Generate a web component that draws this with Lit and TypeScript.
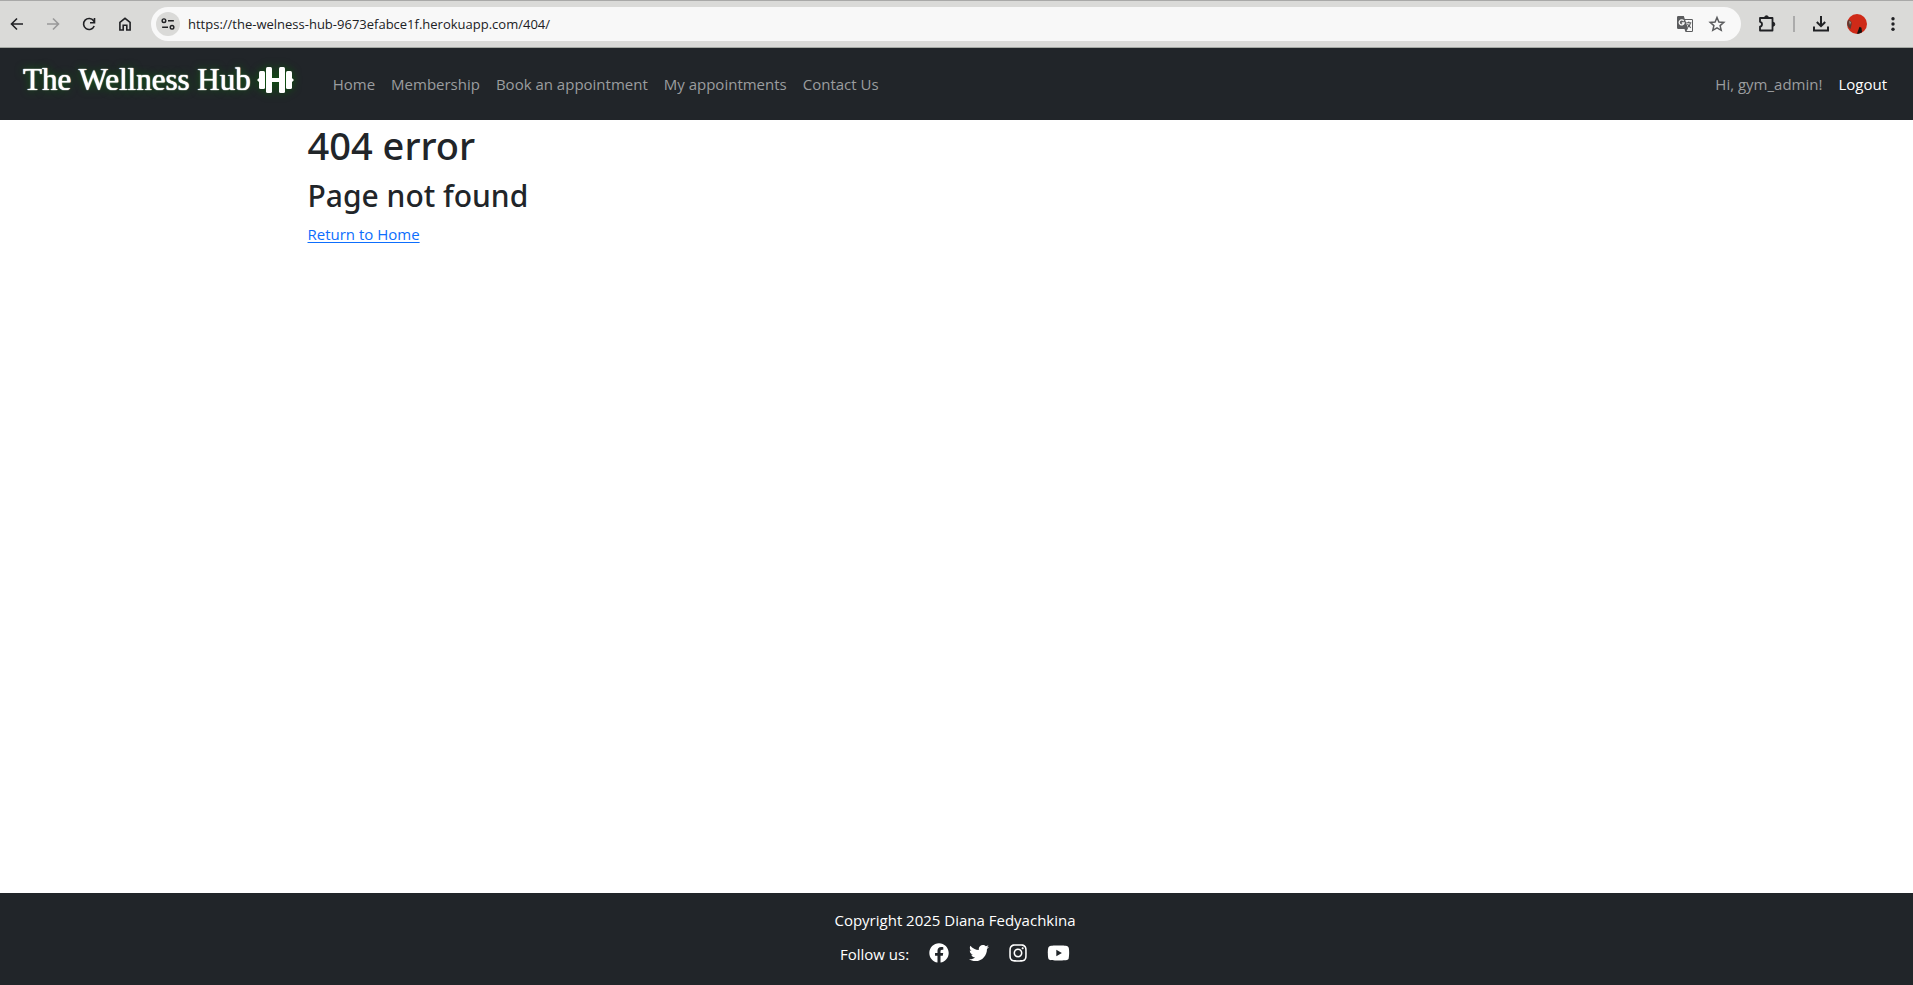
import { LitElement, html, css, svg } from "lit";
import { customElement } from "lit/decorators.js";

const NAV_LINKS = ["Home", "Membership", "Book an appointment", "My appointments", "Contact Us"];

const SOCIAL = [
  { name: "Facebook", box: "0 0 512 512", w: 20, d: "M504 256C504 119 393 8 256 8S8 119 8 256c0 123.78 90.69 226.38 209.25 245V327.69h-63V256h63v-54.64c0-62.15 37-96.48 93.67-96.48 27.14 0 55.52 4.84 55.52 4.84v61h-31.28c-30.8 0-40.41 19.12-40.41 38.73V256h68.78l-11 71.69h-57.78V501C413.31 482.38 504 379.78 504 256z" },
  { name: "Twitter", box: "0 0 512 512", w: 20, d: "M459.37 151.716c.325 4.548.325 9.097.325 13.645 0 138.72-105.583 298.558-298.558 298.558-59.452 0-114.68-17.219-161.137-47.106 8.447.974 16.568 1.299 25.34 1.299 49.055 0 94.213-16.568 130.274-44.832-46.132-.975-84.792-31.188-98.112-72.772 6.498.974 12.995 1.624 19.818 1.624 9.421 0 18.843-1.3 27.614-3.573-48.081-9.747-84.143-51.98-84.143-102.985v-1.299c13.969 7.797 30.214 12.67 47.431 13.319-28.264-18.843-46.781-51.005-46.781-87.391 0-19.492 5.197-37.36 14.294-52.954 51.655 63.675 129.3 105.258 216.365 109.807-1.624-7.797-2.599-15.918-2.599-24.04 0-57.828 46.782-104.934 104.934-104.934 30.213 0 57.502 12.67 76.67 33.137 23.715-4.548 46.456-13.32 66.599-25.34-7.798 24.366-24.366 44.833-46.132 57.827 21.117-2.273 41.584-8.122 60.426-16.243-14.292 20.791-32.161 39.308-52.628 54.253z" },
  { name: "Instagram", box: "0 0 448 512", w: 18, d: "M224.1 141c-63.6 0-114.9 51.3-114.9 114.9s51.3 114.9 114.9 114.9S339 319.5 339 255.9 287.7 141 224.1 141zm0 189.6c-41.1 0-74.7-33.5-74.7-74.7s33.5-74.7 74.7-74.7 74.7 33.5 74.7 74.7-33.6 74.7-74.7 74.7zm146.4-194.3c0 14.9-12 26.8-26.8 26.8-14.9 0-26.8-12-26.8-26.8s12-26.8 26.8-26.8 26.8 12 26.8 26.8zm76.1 27.2c-1.7-35.9-9.9-67.7-36.2-93.9-26.2-26.2-58-34.4-93.9-36.2-37-2.1-147.9-2.1-184.9 0-35.8 1.7-67.6 9.9-93.9 36.1s-34.4 58-36.2 93.9c-2.1 37-2.1 147.9 0 184.9 1.7 35.9 9.9 67.7 36.2 93.9s58 34.4 93.9 36.2c37 2.1 147.9 2.1 184.9 0 35.9-1.7 67.7-9.9 93.9-36.2 26.2-26.2 34.4-58 36.2-93.9 2.1-37 2.1-147.8 0-184.8zM398.8 388c-7.8 19.6-22.9 34.7-42.6 42.6-29.5 11.7-99.5 9-132.1 9s-102.7 2.6-132.1-9c-19.6-7.8-34.7-22.9-42.6-42.6-11.7-29.5-9-99.5-9-132.1s-2.6-102.7 9-132.1c7.8-19.6 22.9-34.7 42.6-42.6 29.5-11.7 99.5-9 132.1-9s102.7-2.6 132.1 9c19.6 7.8 34.7 22.9 42.6 42.6 11.7 29.5 9 99.5 9 132.1s2.7 102.7-9 132.1z" },
  { name: "YouTube", box: "0 0 576 512", w: 23, d: "M549.655 124.083c-6.281-23.65-24.787-42.276-48.284-48.597C458.781 64 288 64 288 64S117.22 64 74.629 75.486c-23.497 6.322-42.003 24.947-48.284 48.597-11.412 42.867-11.412 132.305-11.412 132.305s0 89.438 11.412 132.305c6.281 23.65 24.787 41.5 48.284 47.821C117.22 448 288 448 288 448s170.78 0 213.371-11.486c23.497-6.321 42.003-24.171 48.284-47.821 11.412-42.867 11.412-132.305 11.412-132.305s0-89.438-11.412-132.305zm-317.51 213.508V175.185l142.739 81.205-142.739 81.201z" },
];

@customElement("app-root")
export class AppRoot extends LitElement {
  static styles = css`
    :host { display: flex; flex-direction: column; min-height: 100vh; background: #fff; color: #212529;
      font: 15px/24px "Open Sans", "Noto Sans", sans-serif; }
    * { box-sizing: border-box; }
    svg { display: block; }
    button { border: 0; padding: 0; background: none; color: #202124; display: grid; place-items: center; width: 20px; height: 20px; flex: none; }
    button:disabled { color: #999; }
    .toolbar { display: flex; align-items: center; height: 48px; padding: 0 10px 0 7px; background: #dadad8;
      border-top: 1px solid #a9a9a8; border-bottom: 1px solid #a4a8a3; }
    .history { display: flex; gap: 16px; }
    .address { flex: 1; display: flex; align-items: center; height: 34px; margin: 0 16px; padding: 0 14px 0 5px; border-radius: 17px; background: #f8f8f8; }
    .address .site { width: 24px; height: 24px; border-radius: 50%; background: #dadad8; }
    .address input { flex: 1; min-width: 0; border: 0; outline: 0; padding: 0 8px; background: none; color: #202124; font: 13px/20px "Open Sans", "Noto Sans", sans-serif; }
    .address .tools { display: flex; gap: 12px; }
    .address .tools button { color: #5b5c5e; }
    .extras { display: flex; align-items: center; gap: 16px; }
    .rule { width: 2px; height: 16px; background: #ababab; }
    .navbar { display: flex; align-items: center; min-height: 72px; padding: 0 26px 0 23px; background: #212529; }
    .brand { display: flex; align-items: center; gap: 6px; margin-right: 39px; padding-bottom: 9px; color: #fff; text-decoration: none;
      font: 31px/40px "Liberation Serif", serif; text-shadow: 0 0 1px #fff, 0 0 1px #fff, 0 0 8px #0a6a0a; }
    .brand svg { filter: drop-shadow(0 0 4px #0a5a0a); }
    nav { display: flex; flex: 1; gap: 16px; }
    nav a { color: #9b9d9f; text-decoration: none; }
    .user { display: flex; gap: 16px; color: #9b9d9f; }
    .user a { color: #fff; text-decoration: none; }
    main { flex: 1; width: 100%; max-width: 1320px; margin: 0 auto; padding: 2px 12px 0 11px; }
    h1, h2 { margin: 0; font-family: "Noto Sans", "Open Sans", sans-serif; font-weight: 500; }
    h1 { margin-bottom: 8px; font-size: 38px; line-height: 46px; }
    h2 { margin-bottom: 6px; font-size: 30px; line-height: 40px; }
    main a { color: #0d6efd; text-underline-offset: 2px; }
    footer { display: flex; flex-direction: column; align-items: center; padding: 15px 3px 19px 0; background: #212529; color: #fff; }
    footer p { margin: 0 0 10px; }
    .follow { display: flex; align-items: center; gap: 20px; }
    .follow a { color: #fff; }
    .follow svg { margin-bottom: 2px; }
  `;

  private icon(body: unknown, size = 20) {
    return html`<svg width=${size} height=${size} viewBox="0 0 20 20" fill="none" stroke="currentColor" stroke-width="1.6" aria-hidden="true">${body}</svg>`;
  }

  render() {
    return html`
      <div class="toolbar">
        <div class="history">
          <button aria-label="Back">${this.icon(svg`<path d="M16 10H5M10 4.500L4.500 10l5.500 5.500"/>`)}</button>
          <button aria-label="Forward" disabled>${this.icon(svg`<path d="M4 10h11M10 4.500L15.500 10 10 15.500"/>`)}</button>
          <button aria-label="Reload">${this.icon(svg`<path d="M15.200 12a5.500 5.500 0 1 1-.6-5.200L15.500 8.500M15.500 4v4.700H11"/>`)}</button>
          <button aria-label="Home page">${this.icon(svg`<path d="M4.900 16V8.300L10 4.300l5.100 4V16h-3.300v-4.800H8.200V16z"/>`)}</button>
        </div>
        <div class="address">
          <button class="site" aria-label="Site information">${this.icon(svg`<circle cx="5.500" cy="6.300" r="2"/><path d="M10 6.300H16.500M3.500 13.700H10"/><circle cx="14.500" cy="13.700" r="2"/>`, 18)}</button>
          <input aria-label="Address" value="https://the-welness-hub-9673efabce1f.herokuapp.com/404/" />
          <div class="tools">
            <button aria-label="Translate">${this.icon(svg`<path d="M3.200 2h5.600l1 3H16.800A1.200 1.200 0 0 1 18 6.200v10.600a1.200 1.200 0 0 1-1.200 1.200H10.500l-1-3H3.200A1.200 1.200 0 0 1 2 13.800V3.200A1.200 1.200 0 0 1 3.200 2z" fill="currentColor" stroke="none"/><path d="M10.200 6H17v11h-5.500l1.500-2.500z" fill="#f8f8f8" stroke="none"/><path d="M8.700 7a2.500 2.500 0 1 0 .4 2H6.800" stroke="#f8f8f8" stroke-width="1.300"/><path d="M11.300 8.800h5M13.800 7.500v1.300M15.500 8.800c-.5 2.500-1.500 3.700-3 4.700M12.500 10c.7 1.500 1.700 2.500 3.300 3.700" stroke-width="1.100"/>`)}</button>
            <button aria-label="Bookmark">${this.icon(svg`<path d="M10 3.500l1.900 4.500 4.900.4-3.700 3.200 1.100 4.700L10 13.800l-4.200 2.500 1.100-4.700-3.700-3.200 4.900-.4z" stroke-width="1.500"/>`)}</button>
          </div>
        </div>
        <div class="extras">
          <button aria-label="Extensions">${this.icon(svg`<path d="M3 4h12.500v12.500H3v-3.800a2.500 2.500 0 0 0 0-4.900z" stroke-width="1.800" stroke-linejoin="round"/><path d="M7.500 3.800a2 2 0 0 1 4 0zM15.800 8.200a2 2 0 0 1 0 4z" fill="currentColor" stroke-width="1"/>`)}</button>
          <span class="rule"></span>
          <button aria-label="Downloads">${this.icon(svg`<path d="M10 2v10M5.800 8L10 12.200 14.200 8M3 12.500v4h14v-4" stroke-width="2"/>`)}</button>
          <button aria-label="Profile"><svg width="20" height="20" viewBox="0 0 20 20"><circle cx="10" cy="10" r="10" fill="#cf2a18"/><path d="M1 6c3 0 4 2 3.500 5l-1 4C1 14-1 10 1 6z" fill="#5e3a32"/><path d="M2 7l2 1-1 3z" fill="#a99a90"/><path d="M10 19.800l1-3 1.500-4 2 1 .5 4.500c-1.500 1-3.500 1.700-5 1.500z" fill="#16120f"/></svg></button>
          <button aria-label="Menu"><svg width="20" height="20" fill="currentColor"><circle cx="10" cy="4.700" r="1.700"/><circle cx="10" cy="10" r="1.700"/><circle cx="10" cy="15.300" r="1.700"/></svg></button>
        </div>
      </div>
      <header class="navbar">
        <a class="brand" href="#">The Wellness Hub
          <svg width="37" height="26" viewBox="0 0 37 26" fill="#fff" aria-hidden="true"><rect x="9" width="6" height="26" rx="1.500"/><rect x="22" width="6" height="26" rx="1.500"/><rect x="2" y="4" width="6" height="18" rx="1.500"/><rect x="29" y="4" width="6" height="18" rx="1.500"/><path d="M0 13l3-3v6zM37 13l-3-3v6zM14 11h9v4h-9z"/></svg>
        </a>
        <nav>${NAV_LINKS.map((t) => html`<a href="#">${t}</a>`)}</nav>
        <div class="user"><span>Hi, gym_admin!</span><a href="#">Logout</a></div>
      </header>
      <main>
        <h1>404 error</h1>
        <h2>Page not found</h2>
        <a href="#">Return to Home</a>
      </main>
      <footer>
        <p>Copyright 2025 Diana Fedyachkina</p>
        <div class="follow">
          <span>Follow us:</span>
          ${SOCIAL.map((s) => html`<a href="#" aria-label=${s.name}><svg width=${s.w} height="20" viewBox=${s.box} fill="currentColor"><path d=${s.d} /></svg></a>`)}
        </div>
      </footer>
    `;
  }
}
